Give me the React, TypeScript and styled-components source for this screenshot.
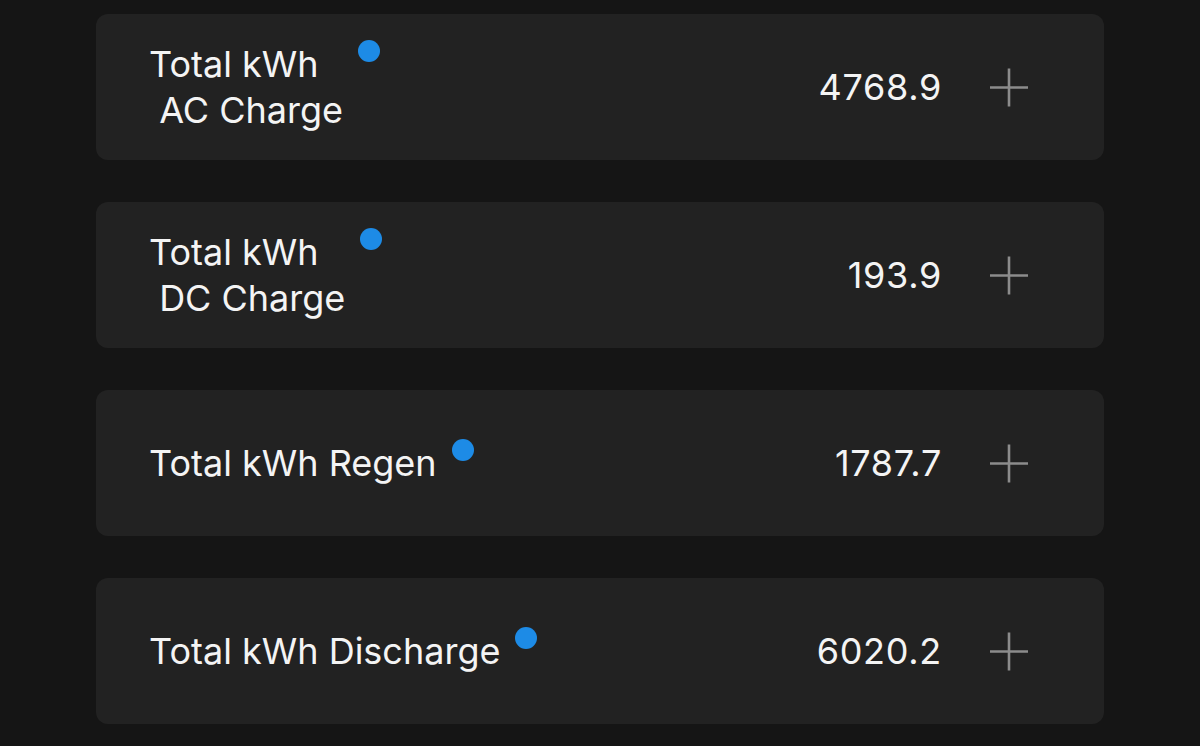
import React from "react";
import styled, { createGlobalStyle } from "styled-components";

const GlobalStyle = createGlobalStyle`
  html, body {
    margin: 0;
    padding: 0;
    background: #151515;
  }
  body {
    font-family: Inter, "Noto Sans", "Liberation Sans", sans-serif;
    -webkit-font-smoothing: antialiased;
  }
`;

const rows = [
  { lines: ["Total kWh", "\u00a0AC Charge"], value: "4768.9" },
  { lines: ["Total kWh", "\u00a0DC Charge"], value: "193.9" },
  { lines: ["Total kWh Regen"], value: "1787.7" },
  { lines: ["Total kWh Discharge"], value: "6020.2" },
];

const Page = styled.div`
  display: flex;
  flex-direction: column;
  gap: 42px;
  padding: 14px 96px 22px;
  min-height: 746px;
  box-sizing: border-box;
`;

const Card = styled.div`
  display: flex;
  align-items: center;
  height: 146px;
  box-sizing: border-box;
  padding: 0 76px 0 53px;
  background: #222222;
  border-radius: 12px;
`;

const Label = styled.div`
  display: flex;
  align-items: flex-start;
  gap: 15px;
  flex: 1;
`;

const LabelText = styled.div`
  font-size: 36px;
  line-height: 46px;
  color: #f4f4f4;
  white-space: pre;
`;

const Dot = styled.span`
  width: 22px;
  height: 22px;
  border-radius: 50%;
  background: #1d8be6;
  margin-top: -1px;
`;

const Value = styled.div`
  font-size: 36px;
  line-height: 46px;
  letter-spacing: 0.7px;
  color: #f4f4f4;
  margin-right: 48px;
`;

const PlusButton = styled.button`
  width: 38px;
  height: 39px;
  padding: 0;
  border: none;
  background: none;
  display: flex;
  color: #8c8c8c;
`;

const Plus = () => (
  <svg width="38" height="39" viewBox="0 0 38 39">
    <path d="M19 0.5v38M0 19.5h38" stroke="currentColor" strokeWidth="2.6" />
  </svg>
);

export default function App() {
  return (
    <>
      <GlobalStyle />
      <Page>
        {rows.map((row) => (
          <Card key={row.value}>
            <Label>
              <LabelText>
                {row.lines.map((l) => (
                  <div key={l}>{l}</div>
                ))}
              </LabelText>
              <Dot />
            </Label>
            <Value>{row.value}</Value>
            <PlusButton>
              <Plus />
            </PlusButton>
          </Card>
        ))}
      </Page>
    </>
  );
}
